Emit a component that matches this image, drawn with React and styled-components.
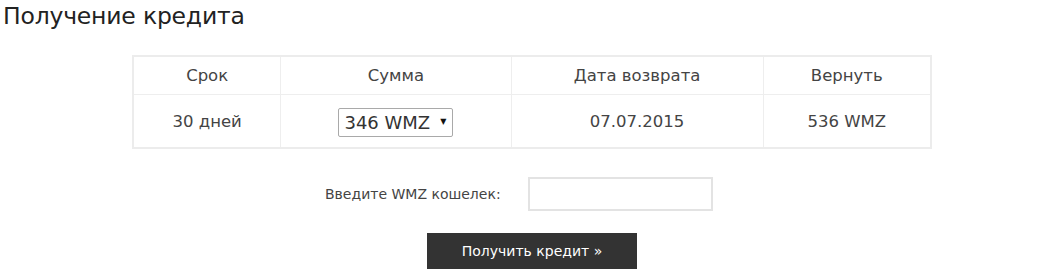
import React from "react";
import styled, { createGlobalStyle } from "styled-components";

const Global = createGlobalStyle`
  body {
    margin: 0;
    background: #fff;
    font-family: "DejaVu Sans", Verdana, sans-serif;
    color: #333;
  }
`;

const Page = styled.div`
  width: 1040px;
  padding: 0 0 0 3px;
`;

const Title = styled.h1`
  margin: 0;
  padding-top: 2px;
  font-size: 23.5px;
  font-weight: 400;
  color: #222;
  line-height: 28px;
  letter-spacing: -0.2px;
`;

const Table = styled.table`
  margin: 25px 0 0 129px;
  width: 800px;
  border-collapse: collapse;
  border: 2px solid #ececec;
`;

const Th = styled.th`
  font-weight: 400;
  font-size: 16.5px;
  height: 37px;
  padding: 0;
  text-align: center;
  border-right: 1px solid #eeeeee;
  border-bottom: 1px solid #eeeeee;
  width: ${p => p.w}px;
  color: #444;
`;

const Td = styled.td`
  font-size: 16.5px;
  height: 52px;
  padding: 0;
  text-align: center;
  border-right: 1px solid #eeeeee;
  color: #444;
`;

const Select = styled.div`
  display: inline-flex;
  align-items: center;
  width: 115px;
  height: 29px;
  box-sizing: border-box;
  border: 1px solid #a9a9a9;
  border-radius: 2px;
  padding: 0 6px 0 5px;
  font-size: 18px;
  color: #333;
  justify-content: space-between;
  margin-top: 2px;
`;

const Arrow = styled.span`
  font-size: 8px;
  color: #111;
  margin-top: -2px;
`;

const Form = styled.div`
  display: flex;
  flex-direction: column;
  align-items: flex-start;
  padding-top: 28px;
`;

const Row = styled.div`
  display: flex;
  align-items: center;
  gap: 30px;
  margin-left: 322px;
`;

const Label = styled.label`
  font-size: 14px;
  color: #444;
  width: 173px;
  white-space: nowrap;
`;

const Input = styled.input`
  width: 185px;
  height: 34px;
  box-sizing: border-box;
  border: 2px solid #e3e3e3;
  outline: none;
`;

const Button = styled.button`
  margin: 22px 0 0 424px;
  width: 210px;
  height: 36px;
  background: #333;
  color: #fff;
  border: none;
  font-family: "DejaVu Sans", Verdana, sans-serif;
  font-size: 14px;
`;

export default function App() {
  return (
    <Page>
      <Global />
      <Title>Получение кредита</Title>
      <Table>
        <thead>
          <tr>
            <Th w={147}>Срок</Th>
            <Th w={230}>Сумма</Th>
            <Th w={252}>Дата возврата</Th>
            <Th w={167}>Вернуть</Th>
          </tr>
        </thead>
        <tbody>
          <tr>
            <Td>30 дней</Td>
            <Td>
              <Select>
                346 WMZ <Arrow>▼</Arrow>
              </Select>
            </Td>
            <Td>07.07.2015</Td>
            <Td>536 WMZ</Td>
          </tr>
        </tbody>
      </Table>
      <Form>
        <Row>
          <Label>Введите WMZ кошелек:</Label>
          <Input />
        </Row>
        <Button>Получить кредит »</Button>
      </Form>
    </Page>
  );
}
